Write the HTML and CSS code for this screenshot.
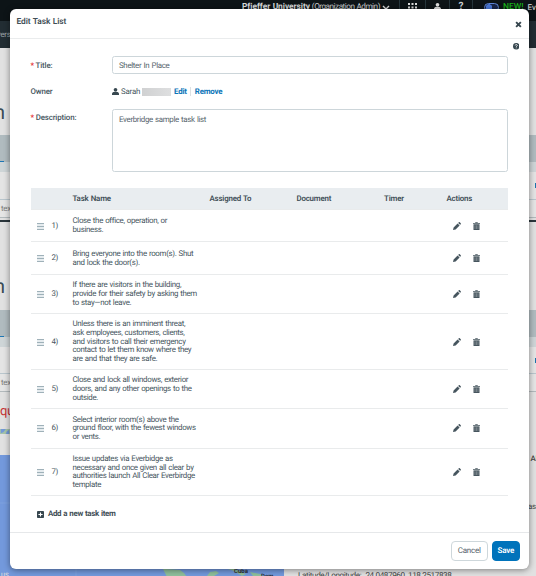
FILE: index.html
```html
<!DOCTYPE html>
<html lang="en">
<head>
<meta charset="utf-8">
<title>Edit Task List</title>
<link rel="stylesheet" href="styles.css">
</head>
<body>
<svg class="defs" aria-hidden="true">
  <symbol id="pencil" viewBox="0 0 16 16"><path d="M0 16l1.200-5.200 8-8 4 4-8 8zM10.300 1.800l1.400-1.300c.5-.5 1.200-.5 1.800 0l2 2c.5.6.5 1.200 0 1.800l-1.300 1.400z"/></symbol>
  <symbol id="trash" viewBox="0 0 14 16"><path d="M0 1.800h4L5 .3h4l1 1.500h4v1.900H0z"/><path d="M1 4.700h12V16H1z"/><path class="slots" d="M4 6.500v7.500M7 6.500v7.500M10 6.500v7.500"/></symbol>
  <symbol id="user" viewBox="0 0 16 16"><circle cx="8" cy="4.200" r="4.200"/><path d="M0 16v-2.500C0 10.500 2.500 9 5 9h6c2.500 0 5 1.500 5 4.500V16z"/></symbol>
</svg>

<div class="page">
  <div class="topbar">
    <span class="org"><b>Pfieffer University</b> (Organization Admin)</span>
    <svg class="chev" viewBox="0 0 8 5"><path d="M1 1l3 3 3-3"/></svg>
    <span class="cell first"><svg class="dots" viewBox="0 0 9 9"><path d="M0 0h2v2H0zM3.500 0h2v2h-2zM7 0h2v2H7zM0 3.500h2v2H0zM3.500 3.500h2v2h-2zM7 3.500h2v2H7zM0 7h2v2H0zM3.500 7h2v2h-2zM7 7h2v2H7z"/></svg></span>
    <span class="cell"><svg class="person"><use href="#user"/></svg></span>
    <span class="cell q">?</span>
    <span class="toggle"></span>
    <span class="new">NEW!</span><span class="ev">Ev</span>
  </div>
  <div class="nav"><span>vers</span></div>
  <div class="title"><span>n</span></div>
  <div class="band"></div>
  <div class="subband"></div>
  <div class="gap g1"><i></i></div>
  <div class="filter"><span>tex</span></div>
  <div class="rule"></div>
  <div class="title second"><span>n</span></div>
  <div class="band"></div>
  <div class="subband"></div>
  <div class="gap g2"><i></i></div>
  <div class="filter"><span>tex</span></div>
  <div class="alert"><span>qu</span></div>
  <div class="minimap"><svg viewBox="0 0 10 6"><path d="M0 0h6L3 4 0 5z"/><path d="M7 3l3-2v5H6z"/></svg></div>
  <div class="pale"></div>
  <div class="bottom">
    <div class="map">
      <svg viewBox="0 0 284 121">
        <path class="grid" d="M0 48h284M76 0v121"/>
        <path class="land" d="M162 112l4 2 14 1 4 3 3 4h-20zM207 121l3-4 6-1 3 2-5 3zM222 112l12 2 12 5-4 2-8-5zM250 117l10 2 3 2h-10z"/>
        <text x="234" y="118">Cuba</text><text x="261" y="123">Dom</text><text class="us" x="1" y="122">US</text>
      </svg>
    </div>
    <div class="info">
      <p class="r1">AI</p><p class="r2">ase</p>
      <p class="coord">Latitude/Longitude: &nbsp;24.0487960, 118.2517838</p>
    </div>
  </div>
</div>

<div class="overlay">
<section class="modal" role="dialog" aria-label="Edit Task List">
  <header><h1>Edit Task List</h1><svg class="close" viewBox="0 0 8 8"><path d="M1.300 1.300l5.400 5.400M6.700 1.300L1.300 6.700"/></svg></header>
  <div class="body">
    <div class="help"><svg viewBox="0 0 12 12"><circle cx="6" cy="6" r="6"/><path d="M4 4.500C4 2.300 8 2.300 8 4.500 8 5.800 6 5.700 6 7.200M6 8.300v1.500"/></svg></div>
    <div class="form">
      <div class="label"><em>*</em> Title:</div><div class="input">Shelter In Place</div>
      <div class="label">Owner</div>
      <div class="owner"><svg><use href="#user"/></svg><span class="name">Sarah</span><span class="blur"></span><a>Edit</a><span class="sep"></span><a>Remove</a></div>
      <div class="label desc"><em>*</em> Description:</div><div class="input area">Everbridge sample task list</div>
    </div>
    <div class="table">
      <div class="row head"><span></span><span></span><span>Task Name</span><span>Assigned To</span><span>Document</span><span>Timer</span><span>Actions</span></div>
      <div class="row"><i class="drag"></i><span>1)</span><p>Close the office, operation, or<br>business.</p><div class="actions"><svg class="pen"><use href="#pencil"/></svg><svg class="bin"><use href="#trash"/></svg></div></div>
      <div class="row"><i class="drag"></i><span>2)</span><p>Bring everyone into the room(s). Shut<br>and lock the door(s).</p><div class="actions"><svg class="pen"><use href="#pencil"/></svg><svg class="bin"><use href="#trash"/></svg></div></div>
      <div class="row"><i class="drag"></i><span>3)</span><p>If there are visitors in the building,<br>provide for their safety by asking them<br>to stay—not leave.</p><div class="actions"><svg class="pen"><use href="#pencil"/></svg><svg class="bin"><use href="#trash"/></svg></div></div>
      <div class="row"><i class="drag"></i><span>4)</span><p>Unless there is an imminent threat,<br>ask employees, customers, clients,<br>and visitors to call their emergency<br>contact to let them know where they<br>are and that they are safe.</p><div class="actions"><svg class="pen"><use href="#pencil"/></svg><svg class="bin"><use href="#trash"/></svg></div></div>
      <div class="row"><i class="drag"></i><span>5)</span><p>Close and lock all windows, exterior<br>doors, and any other openings to the<br>outside.</p><div class="actions"><svg class="pen"><use href="#pencil"/></svg><svg class="bin"><use href="#trash"/></svg></div></div>
      <div class="row"><i class="drag"></i><span>6)</span><p>Select interior room(s) above the<br>ground floor, with the fewest windows<br>or vents.</p><div class="actions"><svg class="pen"><use href="#pencil"/></svg><svg class="bin"><use href="#trash"/></svg></div></div>
      <div class="row"><i class="drag"></i><span>7)</span><p>Issue updates via Everbidge as<br>necessary and once given all clear by<br>authorities launch All Clear Everbirdge<br>template</p><div class="actions"><svg class="pen"><use href="#pencil"/></svg><svg class="bin"><use href="#trash"/></svg></div></div>
    </div>
    <div class="add"><svg viewBox="0 0 7 7"><rect width="7" height="7" rx=".8"/><path d="M3.500 1.400v4.200M1.400 3.500h4.200"/></svg>Add a new task item</div>
  </div>
  <footer><button>Cancel</button><button class="save">Save</button></footer>
</section>
</div>
</body>
</html>
```
FILE: styles.css
```css
* { box-sizing: border-box; }
body { margin: 0; width: 536px; height: 576px; overflow: hidden; font: 7.900px/8.700px Roboto, sans-serif; letter-spacing: -.32px; word-spacing: .5px; color: #46555e; text-rendering: geometricPrecision; }
p, h1 { margin: 0; }
.defs { position: absolute; width: 0; height: 0; }
.page { width: 536px; height: 576px; background: #e1e1e1; overflow: hidden; }

.topbar { height: 21px; background: #0d1417; color: #ccd0d2; display: flex; padding-left: 242px; font-size: 8.500px; letter-spacing: 0; line-height: 15px; white-space: nowrap; overflow: hidden; }
.org { width: 139px; font-size: 8.200px; letter-spacing: -.5px; }
.org b { font-weight: 700; color: #d8dbdc; font-size: 8.400px; letter-spacing: -.06px; }
.chev { width: 8px; height: 5px; margin-top: 5px; fill: none; stroke: #ddd; stroke-width: 1.4; flex: none; margin-left: 1px; }
.cell { width: 24px; height: 21px; border-left: 1px solid #26363c; display: flex; justify-content: center; flex: none; }
.cell.first { margin-left: 9px; width: 26px; }
.dots { width: 9px; height: 9px; margin-top: 3px; fill: #ddd; }
.person { width: 7px; height: 7px; margin-top: 3px; fill: #ddd; }
.q { font-weight: 700; font-size: 10px; line-height: 14px; border-right: 1px solid #26363c; }
.toggle { width: 15px; height: 9px; border-radius: 5px; border: 1px solid #5f86d8; background: radial-gradient(circle at 4px 3.5px, #4a78d8 3px, #18264a 3.5px); margin: 3px 4px 0 11px; flex: none; }
.new { color: #19b219; font-weight: 500; width: 24.500px; flex: none; }
.ev { color: #e0e0e0; flex: none; font-size: 8px; }
.nav { height: 27px; background: #222d33; color: #9ba4a8; line-height: 27px; }
.nav span { margin-left: -3px; }
.title { height: 87px; padding-top: 54px; font-size: 20px; line-height: 20px; color: #3a4c55; }
.title span { display: block; margin-left: -6px; }
.title.second { padding-top: 53px; }
.band { height: 27px; background: linear-gradient(90deg, #1d76b4 4px, transparent 0) 0 26px / 100% 1px no-repeat #b0bbbf; }
.subband { height: 10px; background: #ced5d7; }
.gap { height: 28px; border-bottom: 1px solid #b9c6cd; background: #e4e4e4; display: flex; justify-content: flex-end; }
.gap i { width: 1px; height: 5px; margin-top: 11px; background: #1c73ac; }
.g2 { height: 27px; }
.filter { height: 18px; border-bottom: 1px solid #b2b9bc; background: #e5e5e5; line-height: 18px; padding-left: 1px; color: #7b7b7b; }
.rule { height: 5px; background: linear-gradient(#e1e1e1 2px, #2b363c 2px 4px, #e1e1e1 4px); }
.alert { height: 37px; font-size: 13px; line-height: 40px; color: #c63434; }
.minimap { height: 5px; background: #a6c5a9; width: 10px; }
.minimap svg { display: block; width: 10px; height: 5px; fill: #7399d8; }
.pale { height: 21px; }
.bottom { display: flex; height: 121px; }
.map { width: 284px; background: #7399dc; }
.map svg { display: block; width: 284px; height: 121px; }
.grid { stroke: #8aaae2; stroke-width: .5; fill: none; }
.land { fill: #8fbf9c; }
.map text { font: 500 6px Roboto, sans-serif; fill: #222; letter-spacing: 0; }
.map .us { fill: #ddd; }
.info { width: 252px; display: grid; grid-template-rows: 48px 68px 10px; color: #444; }
.info p { white-space: nowrap; }
.r1 { padding-left: 246.500px; font-weight: 500; }
.r2 { padding-left: 244px; }
.coord { padding-left: 14px; font-size: 8.200px; letter-spacing: -.43px; line-height: 11px; }

.overlay { position: absolute; inset: 0; padding: 9px 7.500px 7px 10px; }
.modal { width: 518.500px; height: 560px; background: #fff; border-radius: 6px; box-shadow: 0 1px 6px rgba(0,0,0,.45); display: grid; grid-template-rows: 30px 1fr 37px; overflow: hidden; }
header { display: flex; justify-content: space-between; border-bottom: 1px solid #eaeced; padding: 0 7px 0 6.500px; }
h1 { font-size: 8.400px; letter-spacing: -.09px; line-height: 26px; font-weight: 600; color: #3f4e56; }
.close { width: 7px; height: 7px; margin-top: 11.500px; stroke: #37474f; stroke-width: 2.2; }
.help { height: 16.500px; display: flex; justify-content: flex-end; padding: 4px 9.500px 0 0; }
.help svg { width: 6.500px; height: 6.500px; fill: #37474f; }
.help path { fill: none; stroke: #fff; stroke-width: 1.500; }
.form { padding-left: 20.500px; display: grid; grid-template-columns: 81px 396.500px; grid-template-rows: 18.500px 35px 62.500px; }
.label { font-weight: 500; line-height: 19px; letter-spacing: -.15px; word-spacing: 0; }
.desc { line-height: 17.500px; }
em { color: #e53935; font-style: normal; font-weight: 700; }
.input { border: 1px solid #cdd6da; border-radius: 2.500px; line-height: 17px; padding-left: 6.500px; color: #56646c; }
.label:nth-child(3), .owner { line-height: 36px; }
.owner { display: flex; align-items: center; }
.owner svg { width: 7px; height: 7px; fill: #37474f; margin-right: 2.500px; }
.name { width: 20.500px; letter-spacing: -.2px; }
.blur { width: 29px; height: 8px; margin-right: 3.500px; background: linear-gradient(90deg, #d0d1d2, #dedfe0); }
.owner a { color: #0b74b8; font-weight: 700; letter-spacing: -.2px; }
.sep { width: 1px; height: 9px; background: #dde1e3; margin: 0 3.500px; }
.area { line-height: 20.500px; }
.table { width: 477.500px; margin: 16.500px 0 0 20.500px; display: grid; grid-template-rows: 22px 32px 33px 39px 56px 39px 39.500px 47.500px; }
.row { display: grid; grid-template-columns: 21px 21px 137px 87px 87.500px 62.500px 1fr; align-items: center; border-bottom: 1px solid #e9ebec; }
.row > p { white-space: nowrap; padding-top: 1px; }
.row > span { padding-top: 1px; }
.head { background: #e9edf0; font-weight: 600; color: #3f4e56; letter-spacing: -.2px; }
.drag { width: 7px; height: 7px; margin-left: 6px; margin-top: 1px; background: repeating-linear-gradient(#9fb1b9 0 1px, #e6ecef 1px 3px); }
.actions { grid-column: 7; display: flex; align-items: center; padding-left: 6px; fill: #46555e; }
.pen { width: 8px; height: 8px; margin-right: 12.500px; }
.bin { width: 7px; height: 8px; }
.slots { stroke: #a3abaf; stroke-width: 1.1; }
.add { display: flex; align-items: center; margin: 12.500px 0 0 27px; font-weight: 700; height: 11px; color: #3f4e56; letter-spacing: -.33px; }
.add svg { width: 7px; height: 7px; margin-right: 4px; fill: #37474f; }
.add path { stroke: #fff; stroke-width: 1.100; }
footer { border-top: 1px solid #e6e8ea; display: flex; justify-content: flex-end; gap: 4px; padding: 8px 8.500px 0 0; }
button { width: 36.500px; height: 20px; border: 1px solid #ced7db; border-radius: 4px; background: #fff; font: 8px/18px Roboto, sans-serif; letter-spacing: -.25px; color: #56646c; padding: 0; text-rendering: geometricPrecision; }
.save { width: 28.500px; background: #0073bb; border-color: #0073bb; color: #fff; font-weight: 600; }
```
